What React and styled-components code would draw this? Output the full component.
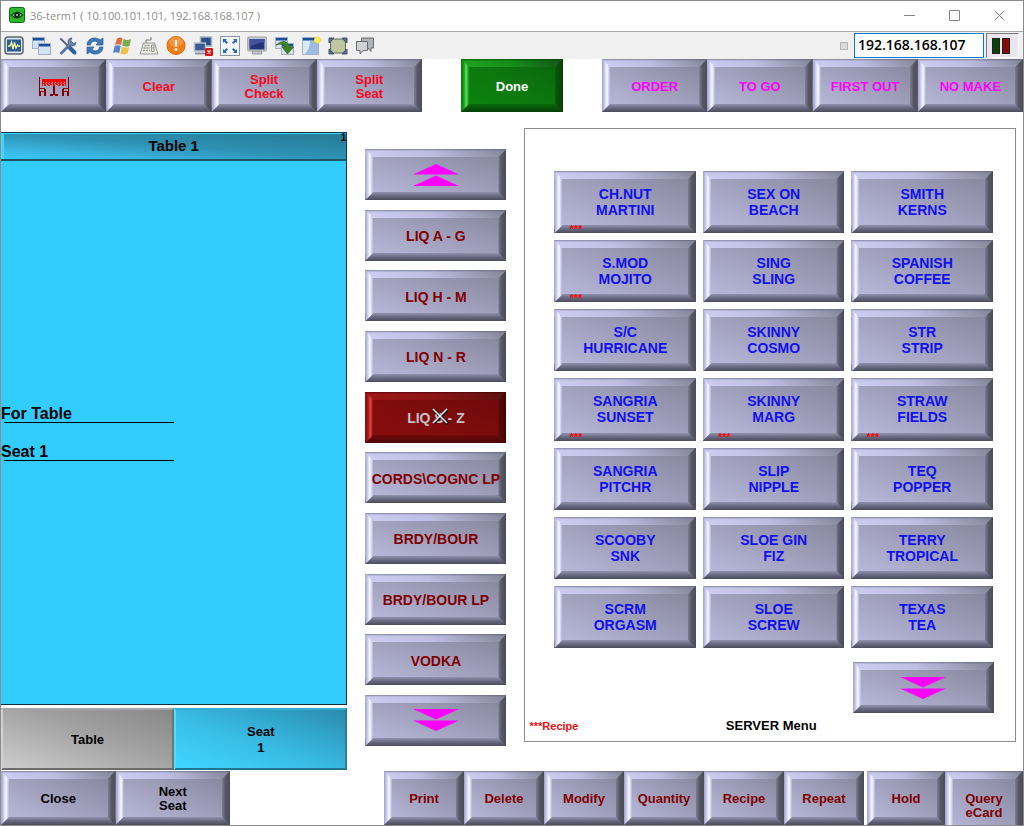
import React from "react";
import styled, { createGlobalStyle, css } from "styled-components";

const GlobalStyle = createGlobalStyle`
  *, *::before, *::after { box-sizing: border-box; }
  body {
    margin: 0;
    background: #fff;
    color: #000;
    font-family: "Liberation Sans", Arial, sans-serif;
  }
`;

const tones = {
  steel: {
    face: "linear-gradient(to top right, #bcbce0, #a0a0bc 50%, #82829a)",
    top: "linear-gradient(to right, #c8c8f0, #b8b8e0 45%, #7c7c92)",
    shade: "linear-gradient(rgba(90,90,110,.6), rgba(255,255,255,.06) 25%, rgba(255,255,255,.12))",
    left: "linear-gradient(to right, #a2a2c8, #c0c0e8 25%, #fafaff 62%, #b4b4dc)",
    right: "linear-gradient(to right, #7e7e94, #565664 45%, #4c4c5a)",
    bottom: "linear-gradient(#9292ae, #686880 50%, #4c4c5a)",
  },
  green: {
    face: "linear-gradient(to top right, #0a860e, #0d780f 50%, #0a640c)",
    top: "linear-gradient(to right, #14a014, #0c860f 50%, #06500a)",
    shade: "linear-gradient(rgba(0,50,0,.5), rgba(255,255,255,.04) 30%, rgba(255,255,255,.06))",
    left: "linear-gradient(to right, #067a08, #18a41c 40%, #66dc6a 65%, #0c8c10)",
    right: "linear-gradient(to right, #085c0a, #053e06)",
    bottom: "linear-gradient(#0a6a0c, #053e06)",
  },
  red: {
    face: "linear-gradient(to top right, #8c0c0c, #7e0c0c 50%, #6c0a0a)",
    top: "linear-gradient(to right, #9c0e0e, #860c0c 50%, #560808)",
    shade: "linear-gradient(rgba(60,0,0,.5), rgba(255,255,255,.04) 30%, rgba(255,255,255,.04))",
    left: "linear-gradient(to right, #8c0c0c, #b01414 40%, #d84c4c 65%, #900c0c)",
    right: "linear-gradient(to right, #5e0808, #400606)",
    bottom: "linear-gradient(#700a0a, #4a0606)",
  },
};

const Window = styled.div`
  min-height: 100vh;
  display: flex;
  flex-direction: column;
  border: 1px solid #8c8c8c;
`;

const TitleBar = styled.header`
  height: 30px;
  padding: 0 14px 2px 8px;
  display: flex;
  align-items: center;
  gap: 5px;
`;

const Title = styled.h1`
  flex: 1;
  margin: 0;
  color: #8e8e8e;
  font: 400 11px "Open Sans", "Noto Sans", sans-serif;
`;

const WindowControls = styled.div`
  display: flex;
  gap: 26px;
`;

const PlainButton = styled.button`
  padding: 0;
  border: 0;
  background: none;
  display: block;
  line-height: 0;
`;

const Toolbar = styled.div`
  height: 28px;
  padding: 0 4px 0 3px;
  display: flex;
  align-items: center;
  background: #f0f0f0;
  border-top: 1px solid #a8a8a8;
`;

const ToolGroup = styled.div`
  flex: 1;
  display: flex;
  gap: 7px;
`;

const TinyCheck = styled.input`
  appearance: none;
  width: 8px;
  height: 8px;
  margin: 0 6px 0 0;
  border: 1px solid #b4b4b4;
  background: #dcdcdc;
`;

const Address = styled.input`
  width: 130px;
  height: 25px;
  padding: 0 0 3px 3px;
  border: 1px solid #0078d7;
  background: #fff;
  font: 600 14px "Open Sans", "Noto Sans", sans-serif;
  color: #000;
`;

const Lamps = styled.div`
  width: 33px;
  height: 25px;
  padding-right: 4px;
  margin-left: 2px;
  border: 1px solid #777;
  border-right-color: #fff;
  border-bottom-color: #fff;
  display: flex;
  align-items: center;
  justify-content: center;
  gap: 2px;
  background: #e8e8ec;
`;

const Lamp = styled.span`
  width: 8px;
  height: 16px;
  border: 1px solid #222;
  background: ${(p) => p.$color};
`;

const Key = styled.button`
  position: relative;
  isolation: isolate;
  min-width: 0;
  width: 100%;
  height: ${(p) => p.$height || "100%"};
  padding: ${(p) => (p.$centered ? 0 : 2)}px 0 0;
  border: 0;
  display: flex;
  align-items: center;
  justify-content: center;
  text-align: center;
  white-space: pre-line;
  color: ${(p) => p.$color || "#800000"};
  font: 700 ${(p) => p.$size || 13}px/${(p) => p.$line || 14}px "Liberation Sans", Arial, sans-serif;
  ${({ $tone = "steel" }) => {
    const t = tones[$tone];
    return css`
      background:
        ${t.shade} top / 100% 8px no-repeat,
        ${t.top} top / 100% 8px no-repeat,
        ${t.bottom} bottom / 100% 8px no-repeat,
        ${t.face};
      &::before,
      &::after {
        content: "";
        position: absolute;
        z-index: -1;
        top: 0;
        bottom: 0;
        width: 8px;
      }
      &::before {
        left: 0;
        background: ${t.left};
        clip-path: polygon(0 0, 100% 8px, 100% calc(100% - 8px), 0 100%);
      }
      &::after {
        right: 0;
        background: ${t.right};
        clip-path: polygon(100% 0, 0 8px, 0 calc(100% - 8px), 100% 100%);
      }
    `;
  }}
`;

const CommandRow = styled.nav`
  height: 53px;
  display: grid;
  grid-template-columns: 421fr 102fr 421fr;
  gap: 39px;
`;

const KeyGroup = styled.div`
  display: grid;
  grid-auto-flow: column;
  grid-auto-columns: minmax(0, 1fr);
`;

const Main = styled.main`
  flex: 1;
  margin-top: 16px;
  padding-right: 7px;
  display: grid;
  grid-template-columns: 346fr 141fr 491fr;
  column-gap: 18px;
`;

const CheckColumn = styled.section`
  padding-top: 4px;
  display: flex;
  flex-direction: column;
`;

const CheckHead = styled.div`
  height: 29px;
  display: grid;
  grid-template-columns: 1fr auto 1fr;
  align-items: center;
  border: 1px solid #0c3c50;
  border-bottom: 2px solid #1c5468;
  border-left: 0;
  background: linear-gradient(to top right, #38c8f8, #3ab8e4 18%, #2e92b4 50%, #267894);
  box-shadow: inset 3px 1px 1px #40d8ff;
`;

const CheckTitle = styled.h2`
  grid-column: 2;
  margin: 0;
  font-size: 15px;
  line-height: 18px;
`;

const CheckCount = styled.span`
  align-self: start;
  justify-self: end;
  font: 700 10px/10px "Liberation Sans", Arial, sans-serif;
`;

const CheckBody = styled.div`
  flex: 1;
  display: flex;
  flex-direction: column;
  justify-content: center;
  gap: 20px;
  background: #33ccff;
  border-right: 1px solid #10303c;
  border-bottom: 1px solid #10303c;
`;

const CheckSection = styled.h3`
  width: 50%;
  margin: 0;
  font-size: 16px;
  line-height: 17px;
  &::after {
    content: "";
    display: block;
    height: 1px;
    margin-left: 3px;
    background: #000;
  }
`;

const SeatTabs = styled.div`
  height: 62px;
  margin: 3px 0 1px;
  display: grid;
  grid-template-columns: 1fr 1fr;
`;

const SeatTab = styled.button`
  padding: 2px 0 0;
  border: 2px solid;
  white-space: pre-line;
  font: 700 13px/16px "Liberation Sans", Arial, sans-serif;
  color: #000;
  ${(p) =>
    p.$active
      ? css`
          background: linear-gradient(to top right, #40d8ff, #38bce6 45%, #2a8aaa) border-box;
          border-color: #35aed4 #267f9e #1f7592 #44e4ff;
        `
      : css`
          background: linear-gradient(to top right, #cecece, #a2a2a2 55%, #868686) border-box;
          border-color: #a6a6a6 #747474 #6c6c6c #d2d2d2;
        `}
`;

const CategoryColumn = styled.nav`
  padding: 21px 0 25px;
  display: flex;
  flex-direction: column;
  justify-content: space-between;
  gap: 4px;
`;

const MenuPanel = styled.section`
  margin-bottom: 29px;
  border: 1px solid #8c8c8c;
  display: flex;
  flex-direction: column;
`;

const ItemGrid = styled.div`
  flex: 1;
  padding: 42px 22px 0 29px;
  display: grid;
  grid-template-columns: repeat(3, minmax(0, 1fr));
  grid-auto-rows: minmax(48px, 1fr);
  gap: 7px;
`;

const RecipeMark = styled.span`
  position: absolute;
  left: 15px;
  bottom: 0;
  color: #e81010;
  font-size: 11px;
  line-height: 8px;
`;

const Pager = styled.div`
  width: 141px;
  margin: 14px 21px 0 auto;
`;

const MenuFooter = styled.div`
  height: 28px;
  padding: 0 2px 2px 4px;
  display: grid;
  grid-template-columns: 1fr auto 1fr;
  align-items: center;
  font: 700 13px/16px "Liberation Sans", Arial, sans-serif;
`;

const RecipeNote = styled.span`
  color: #f01010;
  font-size: 11px;
`;

const ActionRow = styled.footer`
  height: 54px;
  display: flex;
  justify-content: space-between;
  gap: 16px;
  overflow: hidden;
`;

const SeatActions = styled.div`
  flex: 0 1 229px;
  display: grid;
  grid-template-columns: 1fr 1fr;
`;

const ItemActions = styled.div`
  flex: 0 1 639px;
  display: grid;
  grid-template-columns: 480fr 156fr;
  align-items: start;
  gap: 3px;
`;

const ActionKeys = styled.div`
  display: grid;
  grid-auto-flow: column;
  grid-auto-columns: minmax(0, 1fr);
  align-items: start;
`;

const PointerLayer = styled.svg`
  position: absolute;
  left: 50%;
  top: 50%;
  margin: -9px 0 0 -4px;
`;

const Chevrons = ({ down }) => (
  <svg width="46" height="22" viewBox="0 0 46 22" fill="#f0f" aria-hidden="true">
    {down ? (
      <path d="M0 0H46L23 10.500ZM0 11.500H46L23 22Z" />
    ) : (
      <path d="M0 10.500H46L23 0ZM0 22H46L23 11.500Z" />
    )}
  </svg>
);

const TableIcon = () => (
  <svg width="30" height="20" viewBox="0 0 30 20" aria-hidden="true" shapeRendering="crispEdges">
    <path d="M0 0H1V19H0ZM29 0H30V19H29ZM1 11H6L7 13V19H5V15H2V19H1V14H5V12H1ZM29 11H24L23 13V19H25V15H28V19H29V14H25V12H29Z" fill="#800000" />
    <path d="M14 9H16V17H19V19H16V18H14V19H11V17H14Z" fill="#800000" />
    <path d="M3 2H27V9H26V5H4V9H3Z" fill="#f00" />
    <path d="M5 5.500H26M4 6.500H26M5 7.500H25" stroke="#f00" strokeWidth="1" strokeDasharray="2 1" />
    <path d="M5 8H7V9H5ZM9 8H11V9H9ZM14 8H16V9H14ZM19 8H21V9H19ZM23 8H25V9H23Z" fill="#f00" />
  </svg>
);

const AppIcon = () => (
  <svg width="16" height="16" viewBox="0 0 16 16" aria-hidden="true">
    <rect x=".5" y=".5" width="15" height="15" rx="2" fill="#2db52d" stroke="#0e6b16" />
    <path d="M1.500 8Q8 1 14.500 8Q8 15 1.500 8Z" fill="#093d12" />
    <path d="M3 8Q8 3.500 13 8Q8 12.500 3 8Z" fill="#8ab890" />
    <circle cx="8" cy="8" r="2.800" fill="#06280c" />
    <circle cx="8" cy="8" r="1" fill="#b8d5ba" />
  </svg>
);

const Pane = ({ x, y, w = 12, h = 11, fill = "#d5e2f4" }) => (
  <g>
    <rect x={x + 0.5} y={y + 0.5} width={w} height={h} fill={fill} stroke="#a3b0c4" />
    <rect x={x + 1} y={y + 1} width={w - 1} height="2.500" fill="#1c4f9c" />
  </g>
);

const toolIcons = [
  ["Status", <g>
    <rect x="1" y="1" width="18" height="17" rx="3" fill="#dfe5ec" stroke="#5b6573" strokeWidth="1.500" />
    <rect x="3" y="3.500" width="14" height="12" fill="#2d5c92" />
    <path d="M4 10H6L7.500 6L9 13L10.500 6.500L12 12L13.500 9L14.500 10H16" fill="none" stroke="#f4f7a0" strokeWidth="1.300" />
  </g>],
  ["Windows", <g><Pane x={1} y={1} /><Pane x={7} y={7} /></g>],
  ["Tools", <g fill="none" strokeLinecap="round">
    <path d="M3 3L10 10" stroke="#59677c" strokeWidth="2" />
    <path d="M12 12L16.500 16.500" stroke="#2d5e9e" strokeWidth="4" />
    <path d="M3.500 17L13 7.500" stroke="#5a779f" strokeWidth="3" />
    <path d="M13.500 2A4 4 0 1 0 18 6.500L15.500 7.500L13 5Z" fill="#6b86ac" stroke="#4d6a92" />
  </g>],
  ["Refresh", <g fill="#3f78b8" stroke="#2b5a96" strokeWidth=".7">
    <path d="M2 9C2 2 11 0 15 4L18 2V9H11L13 6.500C10 4 6 5 5.500 9Z" />
    <path d="M18 11C18 18 9 20 5 16L2 18V11H9L7 13.500C10 16 14 15 14.500 11Z" />
  </g>],
  ["Start menu", <g>
    <path d="M5 2.500Q8 .5 10.500 2.500L9 9Q6 7.500 3 9Z" fill="#dc6a44" />
    <path d="M11.500 3Q15 5 19 3L17.500 10Q14 11.500 10 9.500Z" fill="#7aad50" />
    <path d="M2.700 10Q6 8.500 8.700 10L7.300 17Q4 15.500 1 17Z" fill="#4f86cc" />
    <path d="M9.800 10.500Q13.500 12.500 17.200 11L15.600 17.500Q12 19.500 8.300 17.500Z" fill="#ecc24c" />
  </g>],
  ["Keyboard", <g fill="none" stroke="#96968f">
    <path d="M7 7V4H12V1" stroke="#777" />
    <path d="M4.500 7H15.500L19 18H1Z" fill="#ecece6" />
    <path d="M5.500 9.500H11M4.500 12H11M4 14.500H11" strokeWidth="1.500" strokeDasharray="2 1" />
    <path d="M12.500 9H15V15.500H12.500ZM12.500 12H15" />
  </g>],
  ["Alert", <g>
    <circle cx="10" cy="9.500" r="9" fill="#f57c14" stroke="#d96508" />
    <ellipse cx="10" cy="6" rx="7" ry="5" fill="#fb9440" />
    <path d="M8.800 4H11.200L10.700 11H9.300Z" fill="#fff" />
    <circle cx="10" cy="13.500" r="1.400" fill="#fff" />
  </g>],
  ["Disconnect", <g>
    <rect x="7.500" y="1" width="11" height="9" fill="#2f4f8c" stroke="#a8b2c0" strokeWidth="1.500" />
    <rect x="1.500" y="7" width="11" height="8" fill="#3a5a98" stroke="#b4bdca" strokeWidth="1.500" />
    <path d="M2 17.500H12" stroke="#8b96a5" strokeWidth="2" />
    <rect x="12" y="12" width="8" height="8" rx="1" fill="#d61a1a" />
    <path d="M14.500 14.500L17.500 17.500M17.500 14.500L14.500 17.500" stroke="#fff" strokeWidth="1.300" />
  </g>],
  ["Full screen", <g>
    <rect x=".5" y=".5" width="19" height="19" fill="#f4f7fb" stroke="#8a95a2" />
    <path d="M3 3H7L5.700 4.300L8 6.600L6.600 8L4.300 5.700L3 7ZM17 3V7L15.700 5.700L13.400 8L12 6.600L14.300 4.300L13 3ZM3 17V13L4.300 14.300L6.600 12L8 13.400L5.700 15.700L7 17ZM17 17H13L14.300 15.700L12 13.400L13.400 12L15.700 14.300L17 13Z" fill="#256ab8" />
  </g>],
  ["Display", <g>
    <path d="M6 15H14L15 18H5Z" fill="#c4c8cc" stroke="#9a9ea4" />
    <rect x=".7" y="1" width="18.600" height="14" rx="1" fill="#c6cad0" stroke="#9ca1a8" />
    <rect x="2.500" y="3" width="15" height="10.500" fill="#26357a" />
    <path d="M2.500 3H17.500V6Q9 7 2.500 11Z" fill="#40539b" />
  </g>],
  ["Transfer", <g>
    <Pane x={1} y={1} /><Pane x={7} y={7} />
    <path d="M2 9Q12 1 16 11H19.500L13.500 18L8 11H11.500Q9 6.500 2 9Z" fill="#3f8424" stroke="#28611a" strokeWidth=".7" />
  </g>],
  ["New window", <g>
    <Pane x={1} y={1} w={16} h={17} fill="#dce9f8" />
    <path d="M9 5H17V18H4Q9 12 9 5Z" fill="#9dbbe2" />
    <circle cx="16.500" cy="4" r="3" fill="#fbf05a" stroke="#efe12e" />
  </g>],
  ["Resize", <g>
    <path d="M5 3H15L17.500 6V14L15 17H5L2.500 14V6Z" fill="#bcc6a0" stroke="#62685a" />
    <path d="M1 2H6L1 7ZM19 2H14L19 7ZM1 18V13L6 18ZM19 18V13L14 18Z" fill="#5a6e8c" stroke="#40546f" />
  </g>],
  ["Chat", <g stroke="#6a6d70">
    <path d="M6.500 2H18.500V12H16V15.500L13 12H6.500Z" fill="#aeb1b5" />
    <path d="M1.500 5.500H12.500V14.500H8L5 18V14.500H1.500Z" fill="#cfd1d4" />
  </g>],
];

const categories = [
  "LIQ A - G", "LIQ H - M", "LIQ N - R", "LIQ S - Z", "CORDS\\COGNC LP",
  "BRDY/BOUR", "BRDY/BOUR LP", "VODKA",
];
const selectedCategory = "LIQ S - Z";

const items = [
  ["CH.NUT\nMARTINI", true], ["SEX ON\nBEACH"], ["SMITH\nKERNS"],
  ["S.MOD\nMOJITO", true], ["SING\nSLING"], ["SPANISH\nCOFFEE"],
  ["S/C\nHURRICANE"], ["SKINNY\nCOSMO"], ["STR\nSTRIP"],
  ["SANGRIA\nSUNSET", true], ["SKINNY\nMARG", true], ["STRAW\nFIELDS", true],
  ["SANGRIA\nPITCHR"], ["SLIP\nNIPPLE"], ["TEQ\nPOPPER"],
  ["SCOOBY\nSNK"], ["SLOE GIN\nFIZ"], ["TERRY\nTROPICAL"],
  ["SCRM\nORGASM"], ["SLOE\nSCREW"], ["TEXAS\nTEA"],
];

const actions = ["Print", "Delete", "Modify", "Quantity", "Recipe", "Repeat"];

const controls = [
  ["Minimize", "M0 5.500H11"],
  ["Maximize", "M.5 .5H10.500V10.500H.5Z"],
  ["Close window", "M.5 .5L10.500 10.500M10.500 .5L.5 10.500"],
];

export default function App() {
  return (
    <Window>
      <GlobalStyle />
      <TitleBar>
        <AppIcon />
        <Title>36-term1 ( 10.100.101.101, 192.168.168.107 )</Title>
        <WindowControls>
          {controls.map(([name, d]) => (
            <PlainButton key={name} aria-label={name}>
              <svg width="19" height="11" viewBox="-4 0 19 11" fill="none" stroke="#888">
                <path d={d} />
              </svg>
            </PlainButton>
          ))}
        </WindowControls>
      </TitleBar>

      <Toolbar>
        <ToolGroup>
          {toolIcons.map(([name, art]) => (
            <PlainButton key={name} aria-label={name}>
              <svg width="20" height="20" viewBox="0 0 20 20">{art}</svg>
            </PlainButton>
          ))}
        </ToolGroup>
        <TinyCheck type="checkbox" aria-label="Keep address" />
        <Address aria-label="Address" defaultValue="192.168.168.107" />
        <Lamps>
          <Lamp $color="#0a4208" />
          <Lamp $color="#840a0a" />
        </Lamps>
      </Toolbar>

      <CommandRow>
        <KeyGroup>
          <Key aria-label="Tables"><TableIcon /></Key>
          {["Clear", "Split\nCheck", "Split\nSeat"].map((t) => (
            <Key key={t} $color="#f8081c">{t}</Key>
          ))}
        </KeyGroup>
        <Key $tone="green" $color="#fff">Done</Key>
        <KeyGroup>
          {["ORDER", "TO GO", "FIRST OUT", "NO MAKE"].map((t) => (
            <Key key={t} $color="#f0f">{t}</Key>
          ))}
        </KeyGroup>
      </CommandRow>

      <Main>
        <CheckColumn>
          <CheckHead>
            <CheckTitle>Table 1</CheckTitle>
            <CheckCount>1</CheckCount>
          </CheckHead>
          <CheckBody>
            <CheckSection>For Table</CheckSection>
            <CheckSection>Seat 1</CheckSection>
          </CheckBody>
          <SeatTabs>
            <SeatTab>Table</SeatTab>
            <SeatTab $active>{"Seat\n1"}</SeatTab>
          </SeatTabs>
        </CheckColumn>

        <CategoryColumn>
          <Key $height="51px" $centered aria-label="Previous categories"><Chevrons /></Key>
          {categories.map((t) => {
            const on = t === selectedCategory;
            return (
              <Key
                key={t}
                $height="51px"
                $size={14}
                $tone={on ? "red" : "steel"}
                $color={on ? "#c8c0c8" : undefined}
              >
                {t}
                {on && (
                  <PointerLayer width="17" height="17" viewBox="0 0 17 17" fill="none" aria-hidden="true">
                    <path d="M2 2L16 16M15 2L2 15" stroke="#000" strokeWidth="3" />
                    <path d="M1 1L15 15M15 1L1 15" stroke="#fff" strokeWidth="1.500" />
                  </PointerLayer>
                )}
              </Key>
            );
          })}
          <Key $height="51px" $centered aria-label="More categories"><Chevrons down /></Key>
        </CategoryColumn>

        <MenuPanel>
          <ItemGrid>
            {items.map(([t, recipe]) => (
              <Key key={t} $color="#1010f0" $size={14} $line={16} $centered>
                {t}
                {recipe && <RecipeMark>***</RecipeMark>}
              </Key>
            ))}
          </ItemGrid>
          <Pager>
            <Key $height="51px" $centered aria-label="More items"><Chevrons down /></Key>
          </Pager>
          <MenuFooter>
            <RecipeNote>***Recipe</RecipeNote>
            <span>SERVER Menu</span>
          </MenuFooter>
        </MenuPanel>
      </Main>

      <ActionRow>
        <SeatActions>
          <Key $color="#000">Close</Key>
          <Key $color="#000">{"Next\nSeat"}</Key>
        </SeatActions>
        <ItemActions>
          <ActionKeys>
            {actions.map((t) => <Key key={t} $height="54px">{t}</Key>)}
          </ActionKeys>
          <ActionKeys>
            <Key $height="54px">Hold</Key>
            <Key $height="68px">{"Query\neCard"}</Key>
          </ActionKeys>
        </ItemActions>
      </ActionRow>
    </Window>
  );
}
